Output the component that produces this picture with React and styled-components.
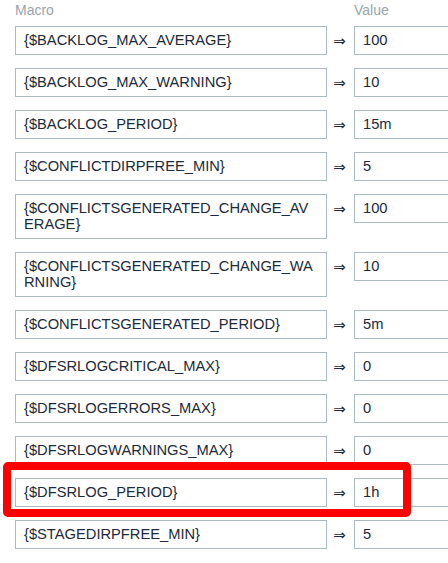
import React from "react";
import styled, { createGlobalStyle } from "styled-components";

const GlobalStyle = createGlobalStyle`
  html, body {
    margin: 0;
    padding: 0;
    background: #ffffff;
    overflow: hidden;
  }
  body {
    font-family: "Liberation Sans", Arial, sans-serif;
    color: #1c2a3a;
  }
`;

const MacroTable = styled.div`
  display: flex;
  flex-direction: column;
  gap: 13px;
  padding: 2px 0 0 15px;
`;

const Row = styled.div`
  position: relative;
  display: grid;
  grid-template-columns: 312px 27px 120px;
  align-items: start;
`;

const HeadRow = styled(Row)`
  margin-bottom: -5px;
`;

const HeadCell = styled.div`
  font-size: 14px;
  line-height: 16px;
  color: #98a3ab;
`;

const MacroField = styled.div`
  box-sizing: border-box;
  border: 1px solid #acbbc2;
  padding: 5px 8px 6px;
  font-size: 14.7px;
  line-height: 16px;
  word-break: break-all;
  background: #fff;
`;

const ValueField = styled(MacroField)`
  height: 29px;
  white-space: nowrap;
`;

const Arrow = styled.div`
  height: 29px;
  display: flex;
  align-items: center;
  justify-content: center;
  font-family: "DejaVu Sans", sans-serif;
  font-size: 15px;
  padding-right: 2px;
`;

const Highlight = styled.div`
  position: absolute;
  left: -12px;
  top: -16px;
  width: 408px;
  height: 55px;
  box-sizing: border-box;
  border: 8px solid #ff0000;
  border-radius: 5px;
  pointer-events: none;
`;

const macros = [
  ["{$BACKLOG_MAX_AVERAGE}", "100"],
  ["{$BACKLOG_MAX_WARNING}", "10"],
  ["{$BACKLOG_PERIOD}", "15m"],
  ["{$CONFLICTDIRPFREE_MIN}", "5"],
  ["{$CONFLICTSGENERATED_CHANGE_AVERAGE}", "100"],
  ["{$CONFLICTSGENERATED_CHANGE_WARNING}", "10"],
  ["{$CONFLICTSGENERATED_PERIOD}", "5m"],
  ["{$DFSRLOGCRITICAL_MAX}", "0"],
  ["{$DFSRLOGERRORS_MAX}", "0"],
  ["{$DFSRLOGWARNINGS_MAX}", "0"],
  ["{$DFSRLOG_PERIOD}", "1h", true],
  ["{$STAGEDIRPFREE_MIN}", "5"],
];

const App = () => {
  return (
    <>
      <GlobalStyle />
      <MacroTable>
        <HeadRow>
          <HeadCell>Macro</HeadCell>
          <div />
          <HeadCell>Value</HeadCell>
        </HeadRow>
        {macros.map(([name, value, marked]) => (
          <Row key={name}>
            <MacroField>{name}</MacroField>
            <Arrow>⇒</Arrow>
            <ValueField>{value}</ValueField>
            {marked && <Highlight />}
          </Row>
        ))}
      </MacroTable>
    </>
  );
};

export default App;
